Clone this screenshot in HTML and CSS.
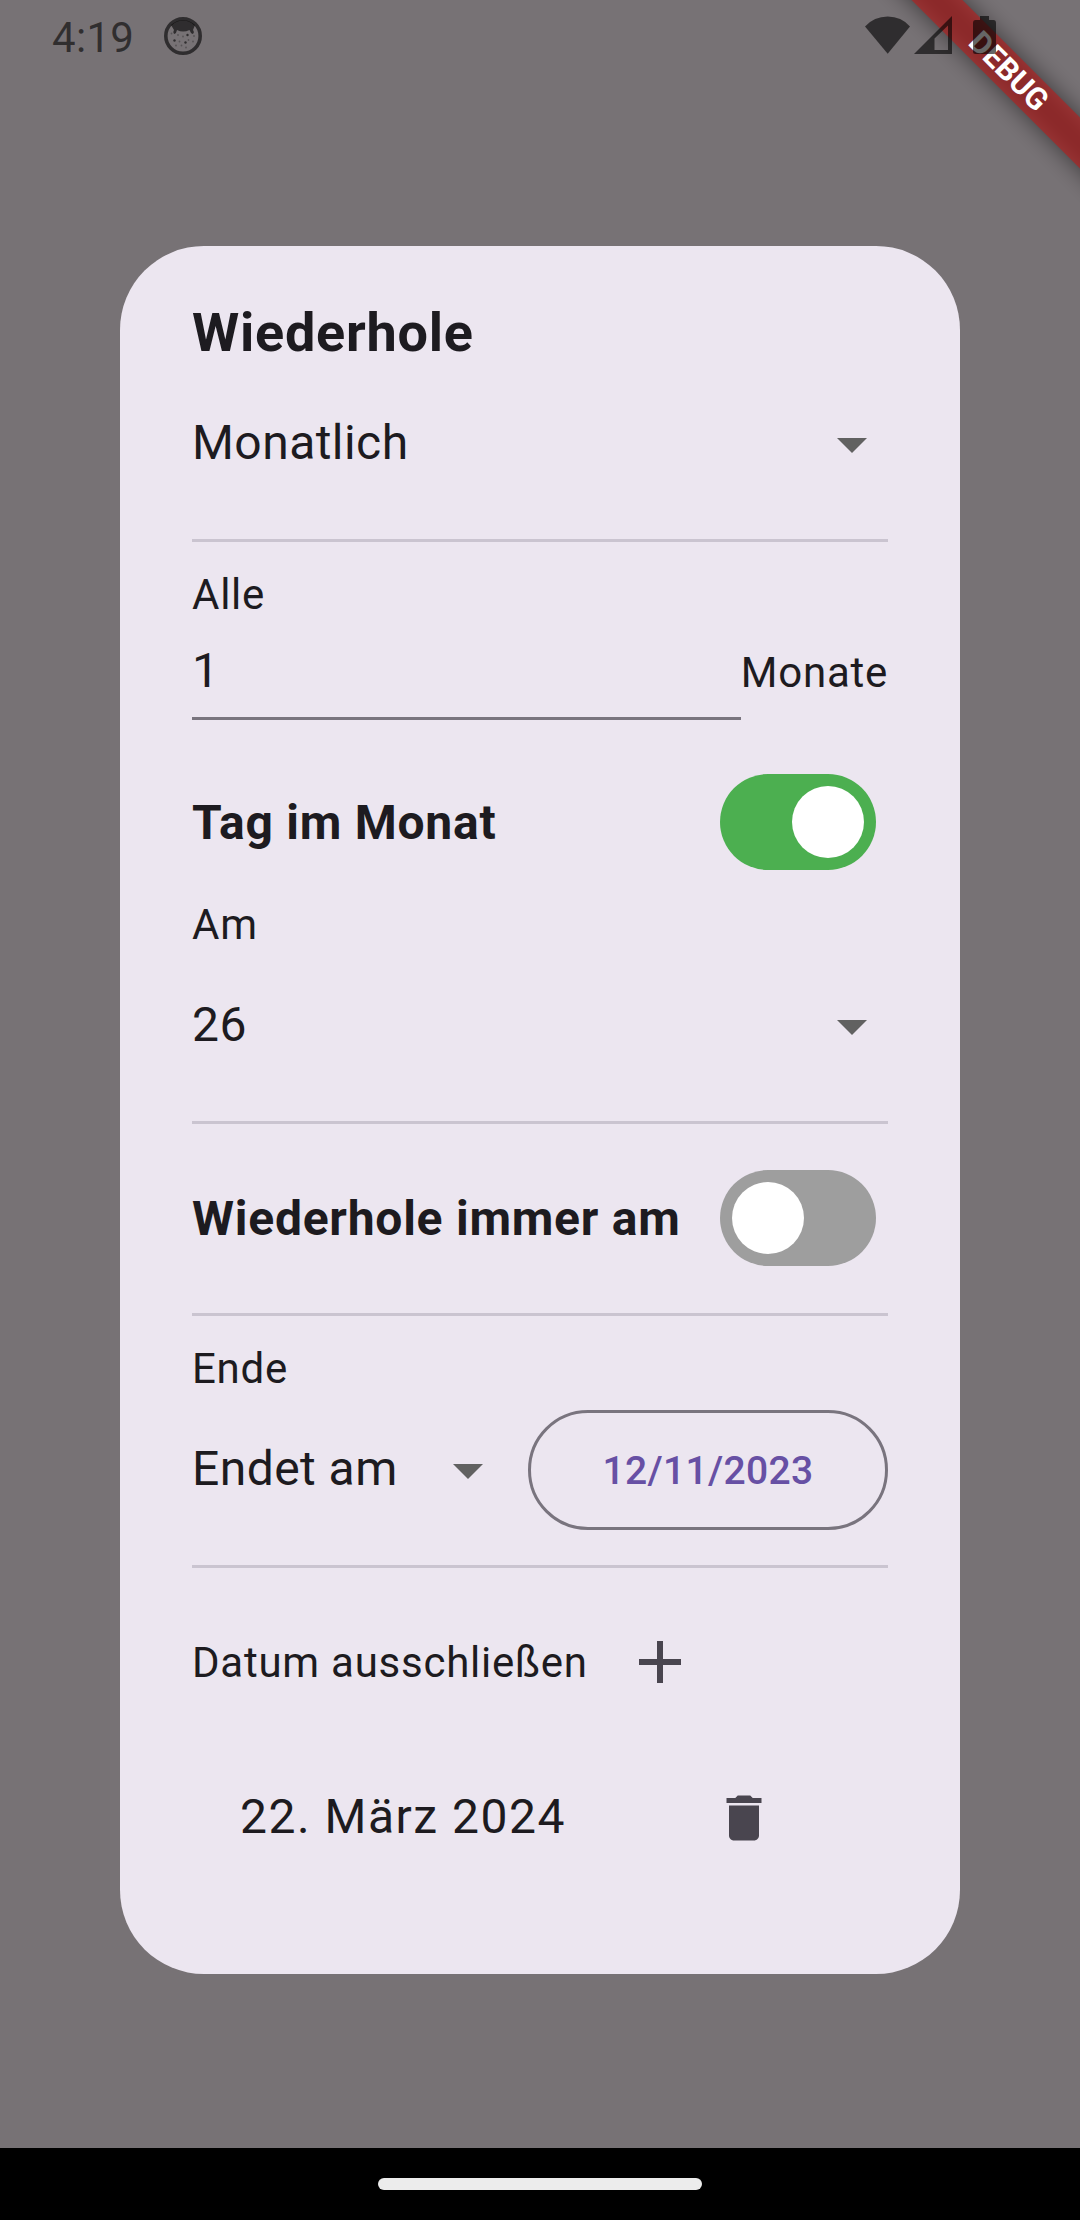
FILE: index.html
```html
<!DOCTYPE html>
<html lang="de">
<head>
<meta charset="utf-8">
<title>Wiederhole</title>
<link rel="stylesheet" href="styles.css">
</head>
<body>
<div class="screen">
  <svg class="banner" viewBox="0 0 240 240" aria-hidden="true">
    <defs><filter id="soft" x="-20%" y="-120%" width="140%" height="340%"><feGaussianBlur stdDeviation="11.5"/></filter></defs>
    <g transform="translate(168.5 71.5) rotate(45)">
      <rect class="banner-shadow" x="-170" y="-18" width="340" height="36" filter="url(#soft)"/>
      <rect class="banner-band" x="-170" y="-18" width="340" height="36"/>
      <text class="banner-text" x="0" y="10">DEBUG</text>
    </g>
  </svg>

  <header class="status">
    <span class="clock">4:19</span>
    <svg class="face" viewBox="0 0 38 38">
      <circle cx="19" cy="19" r="17.2" fill="none" stroke="currentColor" stroke-width="3.6"/>
      <path d="M7 8Q19-2 31 8L29 13Q31 16 28.500 17Q26.500 16 25.500 13Q19 16 13 13Q12.500 16 10.500 17Q8.500 16 10 13Z" fill="currentColor"/>
      <g fill="currentColor"><circle cx="10.500" cy="23.500" r="1.200"/><circle cx="21.500" cy="25.500" r="1.200"/><circle cx="23.500" cy="18" r="1.200"/></g>
      <g fill="currentColor" opacity=".45"><circle cx="14" cy="18" r=".9"/><circle cx="19" cy="19.500" r=".9"/><circle cx="15.500" cy="24.500" r=".9"/><circle cx="24.500" cy="23" r=".9"/><circle cx="29" cy="24.500" r=".9"/><circle cx="17.500" cy="28.500" r=".9"/><circle cx="12" cy="28.500" r=".9"/><circle cx="22" cy="30.500" r=".9"/><circle cx="30" cy="19" r=".9"/><circle cx="7.500" cy="16.500" r=".9"/></g>
    </svg>
    <span class="spacer"></span>
    <svg class="wifi" viewBox="0 0 46 38"><path d="M0 10.500Q9 .5 22.700.5T45 10.500L22.700 37.800Z" fill="currentColor"/></svg>
    <svg class="signal" viewBox="0 0 38 38"><path fill-rule="evenodd" d="M0 38L38 0V38ZM20.500 22.500V34H34V9.500Z" fill="currentColor"/></svg>
    <svg class="battery" viewBox="0 0 23 38"><path d="M7 0H16V4H20.500Q23 4 23 7V35.500Q23 38 20.500 38H2.500Q0 38 0 35.500V7Q0 4 2.500 4H7Z" fill="currentColor"/></svg>
  </header>

  <main class="dialog">
    <h1 class="title">Wiederhole</h1>
    <div class="select frequency"><span>Monatlich</span><svg class="arrow" viewBox="0 0 24 24"><path d="M7 10l5 5 5-5z"/></svg></div>
    <hr class="rule">
    <div class="label every">Alle</div>
    <div class="interval"><span class="field">1</span><span class="unit">Monate</span></div>
    <div class="toggle-row day"><span class="strong">Tag im Monat</span><span class="switch on"><i class="knob"></i></span></div>
    <div class="label on-day">Am</div>
    <div class="select monthday"><span>26</span><svg class="arrow" viewBox="0 0 24 24"><path d="M7 10l5 5 5-5z"/></svg></div>
    <hr class="rule">
    <div class="toggle-row always"><span class="strong">Wiederhole immer am</span><span class="switch"><i class="knob"></i></span></div>
    <hr class="rule">
    <div class="label end">Ende</div>
    <div class="end-row">
      <div class="select end-select"><span>Endet am</span><svg class="arrow" viewBox="0 0 24 24"><path d="M7 10l5 5 5-5z"/></svg></div>
      <button class="date" type="button">12/11/2023</button>
    </div>
    <hr class="rule">
    <div class="exclude"><span class="label">Datum ausschließen</span><svg class="add" viewBox="0 0 24 24"><path d="M19 13h-6v6h-2v-6H5v-2h6V5h2v6h6v2z"/></svg></div>
    <div class="excluded"><span>22. März 2024</span><svg class="trash" viewBox="0 0 24 24"><path d="M6 19c0 1.100.9 2 2 2h8c1.100 0 2-.9 2-2V7H6v12zM19 4h-3.500l-1-1h-5l-1 1H5v2h14V4z"/></svg></div>
  </main>

  <footer class="nav"><span class="pill"></span></footer>
</div>
</body>
</html>
```
FILE: styles.css
```css
* { box-sizing: border-box; }
body { margin: 0; }
.screen {
  position: relative;
  display: flex;
  flex-direction: column;
  width: 1080px;
  height: 2220px;
  overflow: hidden;
  background: #777275;
  color: #1d1b20;
  font-family: Roboto, "Liberation Sans", sans-serif;
}

/* corner ribbon */
.banner { position: absolute; top: 0; right: 0; width: 240px; height: 240px; }
.banner-shadow { fill: #000; fill-opacity: .5; }
.banner-band { fill: #b71c1c; fill-opacity: .63; }
.banner-text { fill: #fff; font-size: 30.6px; font-weight: 700; text-anchor: middle; }

/* status bar */
.status {
  position: relative;
  display: flex;
  align-items: flex-start;
  height: 72px;
  padding: 16px 84px 0 52px;
  color: rgba(0, 0, 0, .6);
}
.clock { font-size: 42px; line-height: 44px; letter-spacing: .3px; }
.face { width: 38px; height: 38px; margin: 1px 0 0 30px; }
.spacer { flex: 1; }
.wifi { width: 46px; height: 38px; }
.signal { width: 38px; height: 38px; margin-left: 3px; }
.battery { width: 23px; height: 38px; margin-left: 21px; }

/* dialog */
.dialog {
  display: flex;
  flex-direction: column;
  width: 840px;
  height: 1728px;
  margin: 174px auto 0;
  padding: 51px 72px 0;
  border-radius: 84px;
  background: #ece6f0;
}
.title { margin: 0; font-size: 54px; line-height: 72px; font-weight: 700; letter-spacing: .75px; }
.label { font-size: 42px; line-height: 60px; letter-spacing: .75px; }
.rule { flex: none; width: 100%; height: 3px; margin: 0; border: 0; background: #cac4d0; }
.select { display: flex; align-items: center; justify-content: space-between; font-size: 48px; line-height: 72px; letter-spacing: .45px; }
.select span { padding-bottom: 3px; }
.arrow { width: 72px; height: 72px; fill: #616161; }
.frequency { height: 144px; margin: 3px 0 23px; }
.every { margin-top: 23px; }
.interval { display: flex; height: 84px; margin-top: 11px; }
.field { flex: 1; border-bottom: 3px solid #79747e; font-size: 48px; line-height: 69px; letter-spacing: .75px; }
.unit { font-size: 42px; line-height: 73px; letter-spacing: .75px; }
.toggle-row { display: flex; align-items: center; justify-content: space-between; height: 96px; padding-right: 12px; }
.strong { padding-top: 2px; font-size: 48px; line-height: 72px; font-weight: 700; letter-spacing: .75px; }
.switch { display: flex; width: 156px; height: 96px; padding: 12px; border-radius: 48px; background: #9e9e9e; }
.switch.on { justify-content: flex-end; background: #4caf50; }
.knob { width: 72px; height: 72px; border-radius: 50%; background: #fff; }
.day { margin-top: 54px; }
.on-day { margin-top: 25px; }
.monthday { height: 144px; margin: -1px 0 23px; }
.always { margin: 46px 0 47px; }
.end { margin-top: 23px; }
.end-row { display: flex; align-items: center; gap: 24px; height: 120px; margin: 11px 0 35px; }
.end-select { width: 312px; }
.date {
  width: 360px;
  height: 120px;
  padding: 1px 0 0;
  border: 3px solid #79747e;
  border-radius: 60px;
  background: transparent;
  color: #6750a4;
  font: 500 39px/60px Roboto, "Liberation Sans", sans-serif;
  letter-spacing: .3px;
}
.exclude { display: flex; align-items: center; gap: 36px; height: 144px; margin-top: 22px; }
.exclude .label { padding-top: 2px; }
.add { width: 72px; height: 72px; fill: #49454f; }
.excluded { display: flex; align-items: center; justify-content: space-between; height: 144px; margin-top: 12px; padding: 0 114px 0 48px; font-size: 48px; letter-spacing: 1.5px; }
.excluded span { padding-bottom: 3px; }
.trash { width: 60px; height: 60px; fill: #49454f; }

/* navigation bar */
.nav { display: flex; justify-content: center; height: 72px; margin-top: auto; padding-top: 30px; background: #000; }
.pill { width: 324px; height: 12px; border-radius: 6px; background: #ececec; }
```
